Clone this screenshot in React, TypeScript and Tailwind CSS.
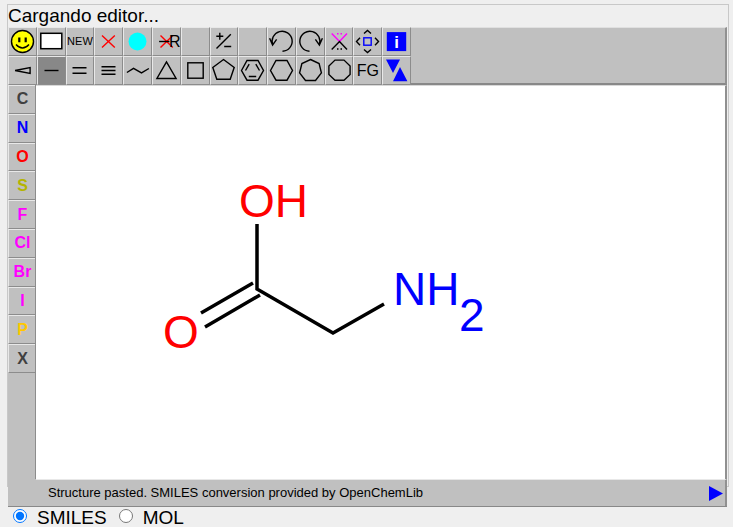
import type { ReactNode } from "react";

type Tool = { label: string; icon?: ReactNode; text?: string; textClass?: string; active?: boolean };

const redoArc = "M8.6 3.5A10 10 0 1 0 -1 9.7M4.9 -2.2L8.9 3.6L11.9 -3.2";
const undoArc = "M-8.6 3.5A10 10 0 1 1 1 9.7M-4.9 -2.2L-8.9 3.6L-11.9 -3.2";
const hexagon = "-11,0 -5.5,-10 5.5,-10 11,0 5.5,9.7 -5.5,9.7";

const tools: Tool[] = [
  {
    label: "SMILES",
    icon: (
      <>
        <circle r="11" fill="#ff0" />
        <path d="M-3.2 -3.9v4.6M3.2 -3.9v4.6" strokeWidth="2.2" />
        <path d="M-6.5 3Q0 10 6.5 3" />
      </>
    ),
  },
  { label: "Square selection", icon: <rect x="-10.7" y="-8.2" width="21" height="15.4" fill="#fff" strokeWidth="1.5" /> },
  { label: "New", text: "NEW", textClass: "text-[11px]" },
  { label: "Delete", icon: <path d="M-6.5 -6L6.3 6M6.3 -6L-6.5 6" stroke="#f00" /> },
  { label: "Color", icon: <circle r="9" fill="#0ff" stroke="none" /> },
  {
    label: "Delete R group",
    icon: (
      <>
        <path d="M-6 -6L6.3 6M6.3 -6L-6 6" stroke="#f00" />
        <path d="M-7.4 0H3" />
        <text x="2.5" y="5.3" fontSize="16" fill="#000" stroke="none">R</text>
      </>
    ),
  },
  { label: "Empty slot 1" },
  { label: "Charge", icon: <path d="M-7 7L7.3 -7.2M-7.2 -5.2h7M-3.7 -8.7v7M0.7 5h7" /> },
  { label: "Empty slot 2" },
  { label: "Undo", icon: <path d={undoArc} /> },
  { label: "Redo", icon: <path d={redoArc} /> },
  {
    label: "Flip",
    icon: (
      <>
        <path d="M-7.8 -8L0 0L7.5 -8M-2.5 -7.7h1.5M1 -7.7h1.5" stroke="#f0f" />
        <path d="M-7.8 8L0 0L7.5 8M-2.5 7.5h1.5M1 7.5h1.5" />
      </>
    ),
  },
  {
    label: "Move",
    icon: (
      <>
        <rect x="-3.7" y="-3.7" width="7.4" height="7.4" stroke="#00f" />
        <path d="M-3.5 -8L0 -11L3.5 -8M-3.5 8L0 11L3.5 8M-7.5 -3.7L-11 0L-7.5 3.7M7.5 -3.7L11 0L7.5 3.7" />
      </>
    ),
  },
  {
    label: "Info",
    icon: (
      <>
        <rect x="-9.7" y="-9.4" width="19.4" height="19" fill="#00f" stroke="none" />
        <text y="6" fontSize="17" fontWeight="bold" fill="#fff" stroke="none" textAnchor="middle">i</text>
      </>
    ),
  },
  { label: "Stereo bond", icon: <path d="M-7.4 0L7.6 -3V3Z" /> },
  { label: "Single bond", active: true, icon: <path d="M-7 0H7" /> },
  { label: "Double bond", icon: <path d="M-7 -2.7H7M-7 2.7H7" /> },
  { label: "Triple bond", icon: <path d="M-7 -3.7H7M-7 0H7M-7 3.7H7" /> },
  { label: "Chain", icon: <path d="M-10.6 2L-4 -2.2L4 2.4L11.4 -2" /> },
  { label: "Three-membered ring", icon: <polygon points="0,-8.6 -9.6,8 9.6,8" /> },
  { label: "Four-membered ring", icon: <rect x="-7.7" y="-7.7" width="15.4" height="15.4" /> },
  { label: "Five-membered ring", icon: <polygon points="0,-11 10.7,-3 6.7,8.7 -6.7,8.7 -10.7,-3" /> },
  {
    label: "Benzene ring",
    icon: (
      <>
        <polygon points={hexagon} />
        <path d="M-7 0L-3.3 -6.3M3.3 -6.3L7 0M-3.7 6H3.7" />
      </>
    ),
  },
  { label: "Six-membered ring", icon: <polygon points={hexagon} /> },
  { label: "Seven-membered ring", icon: <polygon points="0,-11 8.6,-7 10.9,2.4 5,10 -5,10 -10.9,2.4 -8.6,-7" /> },
  {
    label: "Eight-membered ring",
    icon: <polygon points="-4.5,-10.4 4.5,-10.4 10.6,-4.5 10.6,4 4.5,9.8 -4.5,9.8 -10.6,4 -10.6,-4.5" />,
  },
  { label: "Functional groups", text: "FG", textClass: "text-[16px]" },
  {
    label: "Transfer",
    icon: <path d="M-10.5 -11H3.5L-3.5 2.4ZM-3.5 10.7H10.9L3.5 -3.6Z" fill="#00f" stroke="none" />,
  },
];

const elements = [
  { symbol: "C", color: "text-[#404040]" },
  { symbol: "N", color: "text-[#0000ff]" },
  { symbol: "O", color: "text-[#ff0000]" },
  { symbol: "S", color: "text-[#b4b400]" },
  { symbol: "F", color: "text-[#ff00ff]" },
  { symbol: "Cl", color: "text-[#ff00ff]" },
  { symbol: "Br", color: "text-[#ff00ff]" },
  { symbol: "I", color: "text-[#ff00ff]" },
  { symbol: "P", color: "text-[#ffc800]" },
  { symbol: "X", color: "text-[#404040]" },
];

const bevel =
  "flex min-h-0 min-w-0 items-center justify-center overflow-hidden border border-t-[#e8e8e8] border-l-[#e8e8e8] border-r-[#8c8c8c] border-b-[#8c8c8c]";

function ToolButton({ tool }: { tool: Tool }) {
  return (
    <button type="button" aria-label={tool.label} className={`${bevel} ${tool.active ? "bg-[#888888]" : "bg-[#c0c0c0]"}`}>
      {tool.text && <span className={`leading-none ${tool.textClass}`}>{tool.text}</span>}
      {tool.icon && (
        <svg viewBox="-13.5 -13.5 27 27" className="size-[27px] shrink-0" fill="none" stroke="#000" strokeWidth="1.4">
          {tool.icon}
        </svg>
      )}
    </button>
  );
}

function Molecule() {
  return (
    <svg className="block h-full w-full" role="img" aria-label="Glycine" fontSize="46">
      <path
        d="M221 138V203L297 247L348 218M217 197L165 227M224 209L169 241"
        fill="none"
        stroke="#000"
        strokeWidth="3.5"
      />
      <text x="203" y="131" fill="#f00">OH</text>
      <text x="127" y="262" fill="#f00">O</text>
      <text x="357" y="219" fill="#00f">NH</text>
      <text x="423" y="245" fill="#00f">2</text>
    </svg>
  );
}

export default function App() {
  return (
    <div className="min-h-screen bg-[#efefef] pt-1 pr-1 pl-[7px] font-['Liberation_Sans',Arial,sans-serif] text-black">
      <div className="border border-[#c8c8c8] pr-px">
        <p className="text-[19px] leading-[22px]">Cargando editor...</p>

        <main className="-mb-[21px] bg-[#c0c0c0]">
          <div className="h-[58px] border-t border-r-2 border-b-2 border-t-[#e0e0e0] border-r-[#909090] border-b-[#888888]">
            <div className="-mt-px grid h-[58px] w-[403px] grid-cols-14 grid-rows-2">
              {tools.map((tool) => (
                <ToolButton key={tool.label} tool={tool} />
              ))}
            </div>
          </div>

          <div className="flex h-[394px]">
            <div className="w-7 shrink-0 border-r border-[#8c8c8c]">
              <div className="grid h-[288px] grid-rows-10">
                {elements.map((element) => (
                  <button
                    key={element.symbol}
                    type="button"
                    className={`${bevel} border-r-0 bg-[#c0c0c0] pl-px text-[16px] leading-none font-bold ${element.color}`}
                  >
                    {element.symbol}
                  </button>
                ))}
              </div>
            </div>
            <div className="min-w-0 flex-1 border-t border-r-2 border-t-[#d8d8d8] border-r-[#909090] bg-white">
              <Molecule />
            </div>
          </div>

          <div className="flex h-7 border-b border-[#888888]">
            <div className="ml-7 flex flex-1 items-center justify-between border-t border-r-2 border-t-[#e8e8e8] border-r-[#909090] pr-0.5 pl-3">
              <p className="text-[13px] leading-4">Structure pasted. SMILES conversion provided by OpenChemLib</p>
              <button type="button" aria-label="Open menu">
                <svg viewBox="0 0 14 15" className="h-[15px] w-3.5">
                  <path d="M0 0L14 7.5L0 15Z" fill="#00f" />
                </svg>
              </button>
            </div>
          </div>
        </main>
      </div>

      <form className="mt-5 flex h-[21px] items-center pl-1.5 text-[19px] leading-[21px]">
        <input id="smiles" type="radio" name="format" defaultChecked className="mr-2.5 mb-1 size-3.5" />
        <label htmlFor="smiles">SMILES</label>
        <input id="mol" type="radio" name="format" className="mr-2.5 mb-1 ml-3 size-3.5" />
        <label htmlFor="mol">MOL</label>
      </form>
    </div>
  );
}
